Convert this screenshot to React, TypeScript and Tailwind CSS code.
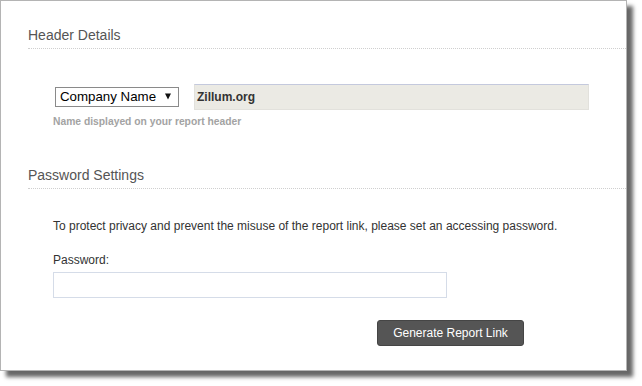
const SectionTitle = ({ title }: { title: string }) => (
  <div className="pb-[5px] border-b border-dotted border-[#cfcfcf]">
    <h2 className="text-[14px] leading-[16px] text-[#555555]">{title}</h2>
  </div>
);

const App = () => {
  return (
    <div className="w-[642px] h-[386px] bg-white" style={{ fontFamily: '"Liberation Sans", Arial, sans-serif' }}>
      <div className="w-[627px] h-[371px] bg-white border border-[#b4b4b4] shadow-[6px_6px_4px_rgba(0,0,0,0.6)]">
        <div className="pl-[27px] pt-[26px]">
          <SectionTitle title="Header Details" />
        </div>

        <div className="pl-[52px] mt-[35px]">
          <div className="flex items-center">
            <div className="ml-[2px] w-[124px] h-[20px] border border-[#8a8a8a] bg-white flex items-center justify-between pl-[4px] pr-[7px]">
              <span className="text-[13.3px] leading-[16px] text-black">Company Name</span>
              <svg width="6" height="7" viewBox="0 0 6 7" className="mt-[-1px]">
                <polygon points="0,0.5 6,0.5 3,6.5" fill="#111111" />
              </svg>
            </div>
            <div className="ml-[15px] w-[395px] h-[26px] bg-[#ebeae4] border border-[#e2e1dc] border-t-[#c4c9dd] flex items-center pl-[2px]">
              <span className="text-[12px] leading-[14px] font-bold text-[#333333]">Zillum.org</span>
            </div>
          </div>
          <p className="mt-[5px] text-[10.3px] leading-[13px] font-bold text-[#a3a3a3]">
            Name displayed on your report header
          </p>
        </div>

        <div className="pl-[27px] mt-[39px]">
          <SectionTitle title="Password Settings" />
        </div>

        <div className="pl-[52px] mt-[30px]">
          <p className="text-[12px] leading-[14px] text-[#333333]">
            To protect privacy and prevent the misuse of the report link, please set an accessing password.
          </p>
          <label className="block mt-[20px] text-[12px] leading-[14px] text-[#333333]">Password:</label>
          <input
            type="password"
            className="block mt-[5px] w-[394px] h-[26px] border border-[#d5dce8] bg-white outline-none px-[4px] text-[12px]"
          />
          <button className="mt-[22px] ml-[324px] w-[147px] h-[26px] rounded-[3px] bg-[#555555] border border-[#454545] text-white text-[12px] leading-[14px]">
            Generate Report Link
          </button>
        </div>
      </div>
    </div>
  );
};

export default App;
